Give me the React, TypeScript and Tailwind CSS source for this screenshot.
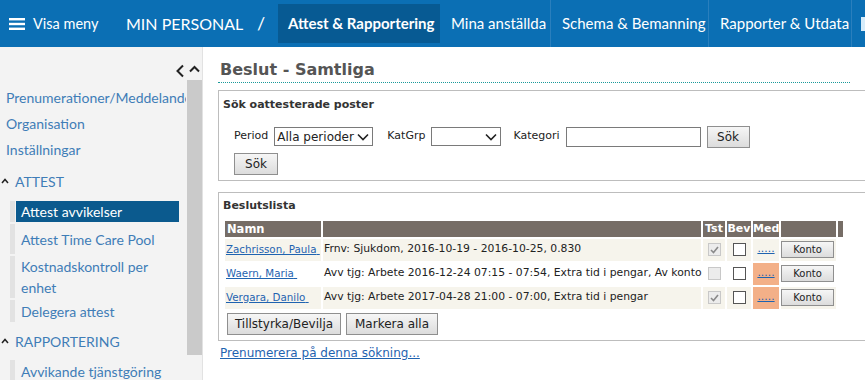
import React from "react";

const navFont = { fontFamily: 'Lato, "Open Sans", sans-serif' };

const Chevron = () => (
  <svg width="12" height="8" viewBox="0 0 12 8" className="shrink-0">
    <path d="M1 1.5 L6 6.5 L11 1.5" stroke="#222" strokeWidth="1.6" fill="none" />
  </svg>
);

const Caret = () => (
  <svg width="8" height="6" viewBox="0 0 8 6" className="ml-[1px] mr-[6px]">
    <path d="M1 5 L4 1.5 L7 5" stroke="#222" strokeWidth="1.5" fill="none" />
  </svg>
);

const Check = ({ checked, disabled }: { checked?: boolean; disabled?: boolean }) => (
  <span
    className={
      "inline-flex w-[13px] h-[13px] items-center justify-center border " +
      (disabled ? "border-[#c8c8c8] bg-[#ececec]" : "border-[#555] bg-white")
    }
  >
    {checked && (
      <svg width="9" height="8" viewBox="0 0 9 8">
        <path d="M1 4 L3.5 6.5 L8 1" stroke="#8a8a8a" strokeWidth="1.6" fill="none" />
      </svg>
    )}
  </span>
);

const Btn = ({ children, className = "" }: { children: React.ReactNode; className?: string }) => (
  <button
    className={
      "border border-[#8f8f8f] bg-gradient-to-b from-[#f6f6f6] to-[#dcdcdc] text-[#222] leading-none " +
      className
    }
  >
    {children}
  </button>
);

const SubItem = ({ children, className = "" }: { children: React.ReactNode; className?: string }) => (
  <div className="ml-[10px] border-l-[5px] border-[#e2e2e2]">
    <div className={"ml-[1px] pl-[5px] " + className}>{children}</div>
  </div>
);

const rows = [
  { name: "Zachrisson, Paula", text: "Frnv: Sjukdom, 2016-10-19 - 2016-10-25, 0.830", tst: "checked", med: false, bg: "bg-[#f6f4ec]" },
  { name: "Waern, Maria", text: "Avv tjg: Arbete 2016-12-24 07:15 - 07:54, Extra tid i pengar, Av konto", tst: "disabled", med: true, bg: "bg-white" },
  { name: "Vergara, Danilo", text: "Avv tjg: Arbete 2017-04-28 21:00 - 07:00, Extra tid i pengar", tst: "checked", med: true, bg: "bg-[#f6f4ec]" },
];

export default function App() {
  return (
    <div className="w-[865px] h-[380px] overflow-hidden bg-white">
      {/* top navigation */}
      <div className="h-[47px] bg-[#0b6fb4] flex items-stretch text-white text-[15px] whitespace-nowrap" style={navFont}>
        <div className="flex items-center pl-[9px] w-[126px] shrink-0">
          <svg width="16" height="12" viewBox="0 0 16 12" className="mr-[8px]">
            <rect x="0" y="0" width="16" height="2.4" fill="white" />
            <rect x="0" y="4.8" width="16" height="2.4" fill="white" />
            <rect x="0" y="9.6" width="16" height="2.4" fill="white" />
          </svg>
          <span className="text-[14.5px]">Visa meny</span>
        </div>
        <div className="flex items-center text-[16px] w-[131px] shrink-0">MIN PERSONAL</div>
        <div className="flex items-center text-[18px] w-[21px] shrink-0">/</div>
        <div className="my-[4px] bg-[#075a93] flex items-center pl-[10px] w-[162px] shrink-0 font-bold">
          Attest &amp; Rapportering
        </div>
        <div className="flex items-center pl-[11px] w-[111px] shrink-0 border-r border-[#2a7fbd]">Mina anställda</div>
        <div className="flex items-center pl-[11px] w-[158px] shrink-0 border-r border-[#2a7fbd]">Schema &amp; Bemanning</div>
        <div className="flex items-center pl-[11px] w-[143px] shrink-0 border-r border-[#2a7fbd]">Rapporter &amp; Utdata</div>
        <div className="flex items-center pl-[9px]">
          <span className="w-[4px] h-[14px] bg-[#d6ecfa]" />
        </div>
      </div>

      <div className="flex h-[333px]">
        {/* sidebar */}
        <div className="w-[203px] shrink-0 bg-[#f3f3f3] border-r border-[#e2e2e2] flex pt-[11px]" style={navFont}>
          <div className="flex-1 min-w-0 overflow-hidden">
            <div className="flex justify-end h-[26px] items-center pr-[1px]">
              <svg width="10" height="14" viewBox="0 0 10 14">
                <path d="M8 1.5 L2.5 7 L8 12.5" stroke="#222" strokeWidth="2" fill="none" />
              </svg>
            </div>
            <div className="text-[14px] text-[#3f7db7] whitespace-nowrap">
              <div className="pl-[6px] h-[26px] flex items-center overflow-hidden">Prenumerationer/Meddelanden</div>
              <div className="pl-[6px] h-[26px] flex items-center">Organisation</div>
              <div className="pl-[6px] h-[27px] flex items-center">Inställningar</div>
              <div className="h-[36px] flex items-center">
                <Caret />
                ATTEST
              </div>
              <div className="flex flex-col gap-[2px] mt-[2px]">
                <SubItem className="bg-[#0b5a8e] text-white h-[21px] flex items-center w-[163px]">Attest avvikelser</SubItem>
                <SubItem className="h-[30px] flex items-center">Attest Time Care Pool</SubItem>
                <SubItem className="leading-[21px] whitespace-normal">
                  Kostnadskontroll per
                  <br />
                  enhet
                </SubItem>
                <SubItem className="h-[22px] flex items-center">Delegera attest</SubItem>
              </div>
              <div className="h-[38px] flex items-center">
                <Caret />
                RAPPORTERING
              </div>
              <SubItem className="h-[22px] flex items-center">Avvikande tjänstgöring</SubItem>
            </div>
          </div>
          <div className="w-[16px] shrink-0 flex flex-col items-center">
            <div className="h-[22px] flex items-center">
              <svg width="11" height="8" viewBox="0 0 11 8">
                <path d="M1 6.5 L5.5 2 L10 6.5" stroke="#222" strokeWidth="2" fill="none" />
              </svg>
            </div>
            <div className="w-[15px] h-[275px] bg-[#cacaca]" />
          </div>
        </div>

        {/* main */}
        <div className="flex-1 pl-[15px] pt-[13px] text-[#222]" style={{ fontFamily: '"DejaVu Sans", Verdana, sans-serif' }}>
          <div className="w-[632px] border-b border-dotted border-[#1a9a9a] pb-[2px]">
            <h1 className="text-[16px] font-bold text-[#555] pl-[2px] leading-[20px]">Beslut - Samtliga</h1>
          </div>

          <div className="mt-[7px] w-[680px] border border-[#bdbdbd] border-r-0 h-[91px] px-[4px] pt-[6px] text-[11px]">
            <div className="font-bold text-[#333]">Sök oattesterade poster</div>
            <div className="flex items-center mt-[12px] pl-[11px] gap-[4px]">
              <span>Period</span>
              <div className="w-[99px] h-[19px] border border-[#7a7a7a] flex items-center justify-between pl-[2px] pr-[3px] text-[12px] ml-[2px]">
                <span>Alla perioder</span>
                <Chevron />
              </div>
              <span className="ml-[10px]">KatGrp</span>
              <div className="w-[70px] h-[19px] border border-[#7a7a7a] flex items-center justify-end px-[3px] ml-[2px]">
                <Chevron />
              </div>
              <span className="ml-[8px]">Kategori</span>
              <div className="w-[135px] h-[20px] border border-[#7a7a7a] bg-white ml-[2px]" />
              <Btn className="w-[43px] h-[22px] ml-[2px] text-[12px]">Sök</Btn>
            </div>
            <div className="pl-[11px] mt-[5px]">
              <Btn className="w-[44px] h-[22px] text-[12px]">Sök</Btn>
            </div>
          </div>

          <div className="mt-[11px] w-[680px] border border-[#bdbdbd] border-r-0 h-[149px] px-[4px] pt-[5px] text-[11px]">
            <div className="font-bold text-[#333]">Beslutslista</div>
            <table className="table-fixed w-[643px] mt-[4px] border-separate border-spacing-x-[2px] border-spacing-y-[2px] text-[10.8px]">
              <colgroup>
                <col className="w-[96px]" />
                <col className="w-[378px]" />
                <col className="w-[22px]" />
                <col className="w-[24px]" />
                <col className="w-[26px]" />
                <col className="w-[55px]" />
                <col className="w-[26px]" />
              </colgroup>
              <thead>
                <tr className="text-white font-bold text-[11px] h-[16px] leading-[16px]">
                  <td className="bg-[#766d66] pl-[2px] text-[11.5px]">Namn</td>
                  <td className="bg-[#766d66]"></td>
                  <td className="bg-[#766d66] text-center">Tst</td>
                  <td className="bg-[#766d66] text-center">Bev</td>
                  <td className="bg-[#766d66] text-center">Med</td>
                  <td className="bg-[#766d66]"></td>
                  <td>
                    <div className="w-[5px] h-[16px] bg-[#766d66]" />
                  </td>
                </tr>
              </thead>
              <tbody>
                {rows.map((r) => (
                  <tr key={r.name} className="h-[22px]">
                    <td className={"pl-[1px] whitespace-nowrap overflow-hidden text-[10.3px] " + r.bg}>
                      <span className="text-[#1f63b0] underline">{r.name}&nbsp;</span>
                    </td>
                    <td className={"whitespace-nowrap pl-[1px] " + r.bg}>{r.text}</td>
                    <td className={"align-middle " + r.bg}>
                      <div className="flex justify-center">
                        <Check checked={r.tst === "checked"} disabled />
                      </div>
                    </td>
                    <td className={"align-middle " + r.bg}>
                      <div className="flex justify-center">
                        <Check />
                      </div>
                    </td>
                    <td className={"text-center align-middle " + (r.med ? "bg-[#f3b088]" : r.bg)}>
                      <span className="text-[#1f63b0] underline leading-none">.....</span>
                    </td>
                    <td className={"align-middle " + r.bg}>
                      <Btn className="w-[53px] h-[17px] text-[10px]">Konto</Btn>
                    </td>
                    <td></td>
                  </tr>
                ))}
              </tbody>
            </table>
            <div className="flex gap-[5px] mt-[2px] ml-[4px]">
              <Btn className="w-[114px] h-[22px] text-[12px]">Tillstyrka/Bevilja</Btn>
              <Btn className="w-[92px] h-[22px] text-[12px]">Markera alla</Btn>
            </div>
          </div>

          <div className="mt-[3px] pl-[2px] text-[12px] text-[#1f63b0] underline">Prenumerera på denna sökning...</div>
        </div>
      </div>
    </div>
  );
}
